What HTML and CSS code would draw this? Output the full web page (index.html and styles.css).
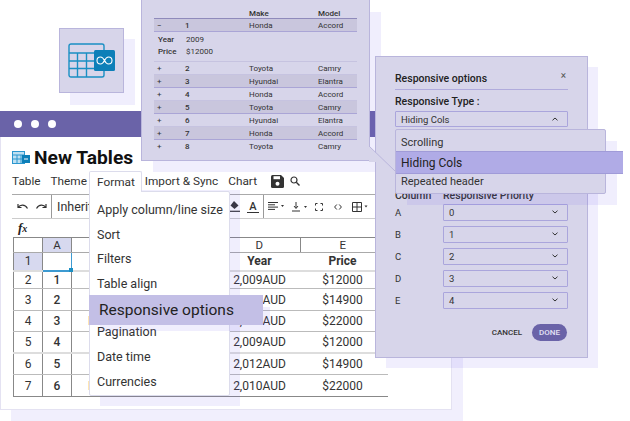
FILE: index.html
```html
<!DOCTYPE html>
<html lang="en">
<head>
    <meta charset="UTF-8">
    <title>Responsive options</title>
    <link rel="stylesheet" href="styles.css">
</head>
<body>
<div class="canvas">

    <!-- Logo tile -->
    <div class="shadow logo-shadow"></div>
    <div class="logo-tile">
        <svg width="48" height="36" viewBox="0 0 48 36">
            <rect x="1" y="1" width="35" height="33" rx="2" fill="none" stroke="#1a8fc4" stroke-width="1.400"/>
            <path d="M1 10H36M1 18H36M1 25.500H36M9.500 10V34M18.500 10V34" fill="none" stroke="#1a8fc4" stroke-width="1.400"/>
            <rect x="26" y="7" width="21" height="21" rx="1.500" fill="#0d7fb8"/>
            <path d="M36.500 17.500c-1.200-2.400-2.500-3.500-4-3.500a3.500 3.500 0 0 0 0 7c1.500 0 2.800-1.100 4-3.500c1.200-2.400 2.500-3.500 4-3.500a3.500 3.500 0 0 1 0 7c-1.500 0-2.800-1.100-4-3.500z" fill="none" stroke="#fff" stroke-width="1.100"/>
        </svg>
    </div>

    <!-- App window -->
    <div class="shadow window-shadow"></div>
    <div class="window">
        <div class="window-bar">
            <span class="dot"></span><span class="dot"></span><span class="dot"></span>
        </div>
        <div class="window-body">
            <div class="doc-title">
                <svg width="18" height="13" viewBox="0 0 18 13">
                    <rect x="0.500" y="0.500" width="12" height="12" fill="#bfe0f2" stroke="#2b97cf"/>
                    <path d="M0 4H13M0 8H13M5 4V13M9 4V13" stroke="#2b97cf" fill="none"/>
                    <rect x="10" y="4" width="8" height="8" fill="#0d7fb8"/>
                    <path d="M12 8h4" stroke="#fff"/>
                </svg>
                New Tables
            </div>
            <nav class="menubar">
                <span>Table</span>
                <span>Theme</span>
                <span class="m-format">Format</span>
                <span>Import &amp; Sync</span>
                <span>Chart</span>
                <svg class="m-save" width="13" height="13" viewBox="0 0 13 13"><path d="M0 1.500Q0 0 1.500 0H10L13 3V11.500Q13 13 11.500 13H1.500Q0 13 0 11.500z" fill="#333"/><rect x="2.500" y="1.200" width="6.500" height="3" fill="#fff"/><circle cx="6.500" cy="8.700" r="2" fill="#fff"/></svg>
                <svg class="m-search" width="10" height="10" viewBox="0 0 10 10"><circle cx="4" cy="4" r="3" fill="none" stroke="#333" stroke-width="1.200"/><path d="M6.300 6.300L9.500 9.500" stroke="#333" stroke-width="1.400"/></svg>
            </nav>
            <div class="toolbar">
                <svg class="t-undo" width="11" height="7" viewBox="0 0 11 7"><path d="M1 1V4.500H4.500M1.200 4.500C3 1.500 8 1 10.500 5.500" fill="none" stroke="#333" stroke-width="1.200"/></svg>
                <svg class="t-redo" width="11" height="7" viewBox="0 0 11 7"><path d="M10 1V4.500H6.500M9.800 4.500C8 1.500 3 1 .5 5.500" fill="none" stroke="#333" stroke-width="1.200"/></svg>
                <span class="t-font">Inherit</span>
                <div class="t-right">
                    <svg class="t-fill" width="11" height="11" viewBox="0 0 11 11"><path d="M5 0L9.500 4.500L5.500 8L1.500 4.500z" fill="#333"/><path d="M0 10.300H11" stroke="#333" stroke-width="1.200"/></svg>
                    <span class="t-color">A</span>
                    <span class="t-sep"></span>
                    <svg class="t-align" width="16" height="9" viewBox="0 0 16 9"><path d="M0 .5H10M0 2.800H7M0 5.100H10M0 7.400H7" stroke="#333"/><path d="M13 3h3l-1.500 2z" fill="#333"/></svg>
                    <svg class="t-valign" width="15" height="10" viewBox="0 0 15 10"><path d="M4 0V6M2 4L4 6.500L6 4M0 9H8" fill="none" stroke="#333"/><path d="M12 4h3l-1.500 2z" fill="#333"/></svg>
                    <svg class="t-full" width="8" height="8" viewBox="0 0 8 8"><path d="M.5 2.500V.5H2.500M5.500 .5H7.500V2.500M7.500 5.500V7.500H5.500M2.500 7.500H.5V5.500" fill="none" stroke="#333"/></svg>
                    <svg class="t-code" width="8" height="6" viewBox="0 0 8 6"><path d="M2.800 .5L.6 3L2.800 5.500M5.200 .5L7.400 3L5.200 5.500" fill="none" stroke="#333"/></svg>
                    <svg class="t-grid" width="16" height="10" viewBox="0 0 16 10"><path d="M.5.5H9.500V9.500H.5zM.5 5H9.500M5 .5V9.500" fill="none" stroke="#333"/><path d="M12.500 3.500h3l-1.500 2z" fill="#333"/></svg>
                </div>
            </div>
            <div class="formula"><i>f</i><i class="fx-x">x</i></div>
            <table class="sheet">
                <colgroup>
                    <col class="c-head"><col class="c-a"><col class="c-b"><col class="c-d"><col class="c-e">
                </colgroup>
                <tr class="col-heads"><td></td><td class="active">A</td><td></td><td>D</td><td>E</td></tr>
                <tr class="r1 heads"><td class="active">1</td><td class="cursor"><span class="handle"></span></td><td></td><td>Year</td><td>Price</td></tr>
                <tr class="r2"><td>2</td><td class="id">1</td><td></td><td>2,009AUD</td><td>$12000</td></tr>
                <tr class="r3"><td>3</td><td class="id">2</td><td></td><td>2,012AUD</td><td>$14900</td></tr>
                <tr class="r4"><td>4</td><td class="id">3</td><td class="hyu">H</td><td>2,010AUD</td><td>$22000</td></tr>
                <tr class="r5"><td>5</td><td class="id">4</td><td></td><td>2,009AUD</td><td>$12000</td></tr>
                <tr class="r6"><td>6</td><td class="id">5</td><td></td><td>2,012AUD</td><td>$14900</td></tr>
                <tr class="r7"><td>7</td><td class="id">6</td><td class="hyu">H</td><td>2,010AUD</td><td>$22000</td></tr>
            </table>
        </div>
    </div>

    <!-- Format menu -->
    <div class="shadow menu-shadow"></div>
    <div class="format-tab">Format</div>
    <div class="format-menu">
        <div class="menu-item">Apply column/line size</div>
        <div class="menu-item">Sort</div>
        <div class="menu-item">Filters</div>
        <div class="menu-item">Table align</div>
        <div class="menu-item hidden-row"></div>
        <div class="menu-item">Pagination</div>
        <div class="menu-item">Date time</div>
        <div class="menu-item">Currencies</div>
    </div>
    <div class="shadow hilite-shadow"></div>
    <div class="menu-hilite">Responsive options</div>

    <!-- Expanded rows panel -->
    <div class="shadow rows-shadow"></div>
    <div class="rows-panel">
        <div class="row row-head"><span></span><span></span><b>Make</b><b>Model</b></div>
        <div class="row alt first"><span>−</span><span class="num">1</span><span>Honda</span><span>Accord</span></div>
        <div class="detail">
            <div class="detail-line"><b>Year</b><span>2009</span></div>
            <div class="detail-line"><b>Price</b><span>$12000</span></div>
        </div>
        <div class="row"><span>+</span><span class="num">2</span><span>Toyota</span><span>Camry</span></div>
        <div class="row alt"><span>+</span><span class="num">3</span><span>Hyundai</span><span>Elantra</span></div>
        <div class="row"><span>+</span><span class="num">4</span><span>Honda</span><span>Accord</span></div>
        <div class="row alt"><span>+</span><span class="num">5</span><span>Toyota</span><span>Camry</span></div>
        <div class="row"><span>+</span><span class="num">6</span><span>Hyundai</span><span>Elantra</span></div>
        <div class="row alt"><span>+</span><span class="num">7</span><span>Honda</span><span>Accord</span></div>
        <div class="row last"><span>+</span><span class="num">8</span><span>Toyota</span><span>Camry</span></div>
    </div>

    <!-- Responsive options dialog -->
    <div class="shadow modal-shadow"></div>
    <div class="modal">
        <div class="modal-title"><span>Responsive options</span><span class="close">×</span></div>
        <div class="type-label">Responsive Type :</div>
        <div class="select type-select">Hiding Cols<svg width="6" height="4" viewBox="0 0 6 4"><path d="M.5 3.300L3 1L5.500 3.300" fill="none" stroke="#333"/></svg></div>
        <div class="prio-head"><span>Column</span><span>Responsive Priority</span></div>
        <div class="prio-row"><span>A</span><div class="select">0<svg width="6" height="4" viewBox="0 0 6 4"><path d="M.5 .7L3 3L5.500 .7" fill="none" stroke="#333"/></svg></div></div>
        <div class="prio-row"><span>B</span><div class="select">1<svg width="6" height="4" viewBox="0 0 6 4"><path d="M.5 .7L3 3L5.500 .7" fill="none" stroke="#333"/></svg></div></div>
        <div class="prio-row"><span>C</span><div class="select">2<svg width="6" height="4" viewBox="0 0 6 4"><path d="M.5 .7L3 3L5.500 .7" fill="none" stroke="#333"/></svg></div></div>
        <div class="prio-row"><span>D</span><div class="select">3<svg width="6" height="4" viewBox="0 0 6 4"><path d="M.5 .7L3 3L5.500 .7" fill="none" stroke="#333"/></svg></div></div>
        <div class="prio-row"><span>E</span><div class="select">4<svg width="6" height="4" viewBox="0 0 6 4"><path d="M.5 .7L3 3L5.500 .7" fill="none" stroke="#333"/></svg></div></div>
        <div class="modal-actions"><span class="cancel">CANCEL</span><span class="done">DONE</span></div>
    </div>

    <!-- Panel pointer -->
    <svg class="pointer" width="28" height="28" viewBox="0 0 28 28">
        <path d="M0 1L16 17H0z" fill="#d7d5ea"/>
        <path d="M0 1L26 26" fill="none" stroke="#b9b5dc"/>
    </svg>

    <!-- Type dropdown -->
    <div class="shadow drop-shadow"></div>
    <div class="dropdown">
        <div class="drop-item drop-first">Scrolling</div>
        <div class="drop-item drop-last">Repeated header</div>
    </div>
    <div class="drop-hilite">Hiding Cols</div>

</div>
</body>
</html>
```

FILE: styles.css
```css
* {
    box-sizing: border-box;
}

body {
    margin: 0;
    background-color: #fff;
    color: #222;
    font-family: Roboto, sans-serif;
    overflow: hidden;
}

.canvas {
    position: relative;
    width: 630px;
    height: 421px;
    overflow: hidden;
}

.shadow {
    position: absolute;
    background: rgba(108, 92, 231, 0.1);
}

/* Logo */
.logo-shadow { left: 70px; top: 39px; width: 65px; height: 66px; }

.logo-tile {
    position: absolute;
    left: 59px;
    top: 28px;
    width: 65px;
    height: 65px;
    padding: 14px 0 0 8px;
    background: #d7d5ea;
    border: 1px solid #b9b5dc;
}

.logo-tile svg {
    display: block;
}

/* Window */
.window-shadow { left: 11px; top: 137px; width: 452px; height: 284px; background: #f1effd; }

.window {
    position: absolute;
    left: 0;
    top: 111px;
    width: 452px;
    height: 299px;
    background: #fff;
    border: 1px solid #e4e2f2;
    border-top: 0;
}

.window-bar {
    display: flex;
    gap: 9px;
    align-items: center;
    height: 26px;
    margin-left: -1px;
    margin-right: -1px;
    padding-left: 14px;
    background: #6a63a8;
}

.dot {
    width: 8px;
    height: 8px;
    border-radius: 50%;
    background: #fff;
}

.window-body {
    padding: 0 0 0 12px;
}

.doc-title {
    display: flex;
    align-items: center;
    gap: 4px;
    height: 30px;
    margin-top: 5px;
    margin-left: -1px;
    font-size: 19.200px;
    font-weight: 700;
    color: #111;
}

.menubar {
    display: flex;
    align-items: center;
    gap: 10px;
    height: 23px;
    width: 376px;
    margin-left: -1px;
    padding-bottom: 4px;
    font-size: 11.800px;
    color: #333;
    border-bottom: 1px solid #aaa;
}

.m-format { visibility: hidden; }
.m-save { margin-left: 4px; margin-right: -4px; }

.toolbar {
    display: flex;
    align-items: center;
    height: 24px;
    width: 376px;
    margin-left: -1px;
    font-size: 12.500px;
    color: #333;
    border-bottom: 1px solid #ccc;
}

.t-undo { margin-left: 5px; margin-right: 8px; }
.t-redo { margin-right: 4px; }

.t-font {
    height: 23px;
    line-height: 23px;
    padding-left: 5px;
    border-left: 1px solid #999;
}

.t-right {
    display: flex;
    align-items: center;
    position: absolute;
    left: 228px;
    height: 23px;
}

.t-color {
    width: 12px;
    margin-left: 7px;
    font-size: 11px;
    text-align: center;
    border-bottom: 1px solid #333;
    line-height: 11px;
    font-weight: 500;
}

.t-sep {
    width: 1px;
    height: 23px;
    margin-left: 4px;
    background: #999;
}

.t-align { margin-left: 4px; }
.t-valign { margin-left: 8px; }
.t-full { margin-left: 8px; }
.t-code { margin-left: 11px; }
.t-grid { margin-left: 10px; }

.formula {
    height: 18px;
    padding-left: 5px;
    line-height: 17px;
    font-family: "Liberation Serif", serif;
    font-size: 13px;
    font-weight: 700;
}

.fx-x {
    font-size: 10px;
}

/* Sheet */
.sheet {
    border-collapse: collapse;
    table-layout: fixed;
    width: 374px;
    font-size: 12px;
    color: #333;
}

.c-head { width: 29px; }
.c-a { width: 29px; }
.c-b { width: 147px; }
.c-d { width: 82px; }
.c-e { width: 87px; }

.sheet td {
    padding: 0;
    text-align: center;
    white-space: nowrap;
    overflow: hidden;
    border-top: 1px solid #bbb;
    border-bottom: 1px solid #bbb;
}

.sheet td:first-child { border-left: 1px solid #888; border-right: 1px solid #888; }
.sheet td:nth-child(2) { border-right: 1px solid #888; }
.sheet td:nth-child(5) { padding-right: 3px; }

.col-heads td { height: 15px; border-top: 1px solid #888; border-bottom: 1px solid #aaa; font-size: 11.500px; }
.col-heads td:nth-child(4) { border-right: 1px solid #888; }

.r1 td { height: 18px; border-bottom: 2px solid #ddd; }
.r2 td { height: 18px; }
.r3 td { height: 22px; }
.r4 td { height: 21px; }
.r5 td { height: 21px; border-bottom: 2px solid #ddd; }
.r6 td { height: 22px; }
.r7 td { height: 22px; border-bottom: 1px solid #888; }

.sheet td.active { background: #d7d9ef; }

.heads td:nth-child(n+4) { font-weight: 700; }

.id { font-weight: 500; }

.sheet td.hyu { text-align: left; padding-left: 16px; }

.sheet td.cursor {
    position: relative;
    overflow: visible;
    border: 1px solid #3d9ad1;
    border-bottom: 2px solid #3d9ad1;
}

.handle {
    position: absolute;
    right: -2px;
    bottom: -2px;
    width: 4px;
    height: 4px;
    background: #1a8fc4;
}

/* Format menu */
.menu-shadow { left: 100px; top: 190px; width: 140px; height: 216px; }

.format-tab {
    position: absolute;
    left: 89px;
    top: 171px;
    width: 53px;
    height: 21px;
    padding: 3px 0 0 7px;
    background: #fff;
    border: 1px solid #dcdcec;
    border-bottom: 0;
    border-radius: 2px 2px 0 0;
    font-size: 11.800px;
    color: #333;
    z-index: 1;
}

.format-menu {
    position: absolute;
    left: 89px;
    top: 191px;
    width: 141px;
    height: 205px;
    padding-top: 6px;
    background: #fff;
    border: 1px solid #dcdcec;
    border-radius: 0 2px 2px 2px;
}

.menu-item {
    height: 24.600px;
    line-height: 24px;
    padding-left: 7px;
    font-size: 12.500px;
    color: #333;
    white-space: nowrap;
}

.menu-item.hidden-row {
    height: 24px;
}

.hilite-shadow { left: 100px; top: 307px; width: 170px; height: 24px; }

.menu-hilite {
    position: absolute;
    left: 89px;
    top: 295px;
    width: 174px;
    height: 30px;
    padding-left: 10px;
    line-height: 30px;
    background: #c3bfe6;
    font-size: 15.500px;
    color: #222;
}

/* Rows panel */
.rows-shadow { left: 153px; top: 12px; width: 228px; height: 160px; }

.rows-panel {
    position: absolute;
    left: 141px;
    top: -1px;
    width: 229px;
    height: 162px;
    padding: 9px 12px 0;
    background: #d7d5ea;
    border: 1px solid #b9b5dc;
    font-size: 8px;
    color: #333;
}

.row {
    display: grid;
    grid-template-columns: 28px 64px 69px 1fr;
    align-items: center;
    height: 13px;
    padding-left: 3px;
    border-bottom: 1px solid #c6c3e0;
}

.row .num { font-weight: 500; }

.row-head { height: 10px; padding-bottom: 1px; border-bottom: 1px solid #8f8abb; }

.row-head b { font-weight: 500; }

.alt {
    background: #c9c6dd;
    border-bottom: 1px solid #aaa5d6;
}

.row.last {
    border-bottom: 0;
}

.detail {
    height: 30px;
    padding: 1px 0 0 4px;
    border-bottom: 1px solid #c6c3e0;
}

.detail-line {
    display: flex;
    height: 12px;
    align-items: center;
}

.detail-line b {
    width: 28px;
    font-weight: 500;
}

/* Dialog */
.modal-shadow { left: 386px; top: 67px; width: 212px; height: 301px; }

.modal {
    position: absolute;
    left: 375px;
    top: 56px;
    width: 213px;
    height: 302px;
    padding: 15px 19px 0 19px;
    background: #d7d5ea;
    border: 1px solid #b9b5dc;
    font-size: 9.500px;
    color: #333;
}

.modal-title {
    display: flex;
    justify-content: space-between;
    height: 18px;
    border-bottom: 1px solid #b0abdc;
    font-size: 10.500px;
    font-weight: 500;
    color: #222;
}

.close {
    font-size: 10px;
    font-weight: 400;
    margin-top: -2px;
    margin-right: 2px;
    color: #555;
}

.type-label {
    margin-top: 5px;
    height: 14px;
    font-size: 10.500px;
    font-weight: 500;
    color: #222;
}

.select {
    display: flex;
    justify-content: space-between;
    align-items: center;
    height: 16px;
    padding: 0 9px 0 5px;
    border: 1px solid #aaa5dc;
    border-radius: 1px;
}

.type-select {
    margin-top: 2px;
}

.prio-head {
    display: flex;
    height: 12px;
    margin-top: 62px;
    font-size: 10.500px;
    font-weight: 500;
    line-height: 13px;
}

.prio-head span:first-child {
    width: 48px;
}

.prio-row {
    display: grid;
    grid-template-columns: 48px 1fr;
    align-items: center;
    height: 22px;
}

.prio-row .select {
    height: 17px;
}

.modal-actions {
    display: flex;
    justify-content: flex-end;
    align-items: center;
    gap: 10px;
    margin-top: 13px;
    padding-right: 1px;
    font-size: 8px;
    font-weight: 500;
}

.done {
    width: 35px;
    height: 17px;
    border-radius: 9px;
    line-height: 17px;
    text-align: center;
    background: #6a63a8;
    color: #e4e2f5;
}

/* Pointer and dropdown */
.pointer {
    position: absolute;
    left: 369px;
    top: 145px;
}

.drop-shadow { left: 407px; top: 141px; width: 210px; height: 64px; }

.dropdown {
    position: absolute;
    left: 395px;
    top: 129px;
    width: 211px;
    height: 65px;
    background: #d7d5ea;
    border: 1px solid #b9b5dc;
    border-radius: 2px;
    font-size: 11px;
    color: #333;
}

.drop-item {
    padding-left: 5px;
}

.drop-first {
    height: 44px;
    padding-top: 5px;
    line-height: 15px;
}

.drop-last {
    line-height: 15px;
}

.drop-hilite {
    position: absolute;
    left: 396px;
    top: 151px;
    width: 227px;
    height: 23px;
    padding-left: 5px;
    line-height: 22px;
    background: #b0abe6;
    border-top: 1px solid #a09bd8;
    border-bottom: 1px solid #a09bd8;
    font-size: 12px;
    color: #222;
}
```
